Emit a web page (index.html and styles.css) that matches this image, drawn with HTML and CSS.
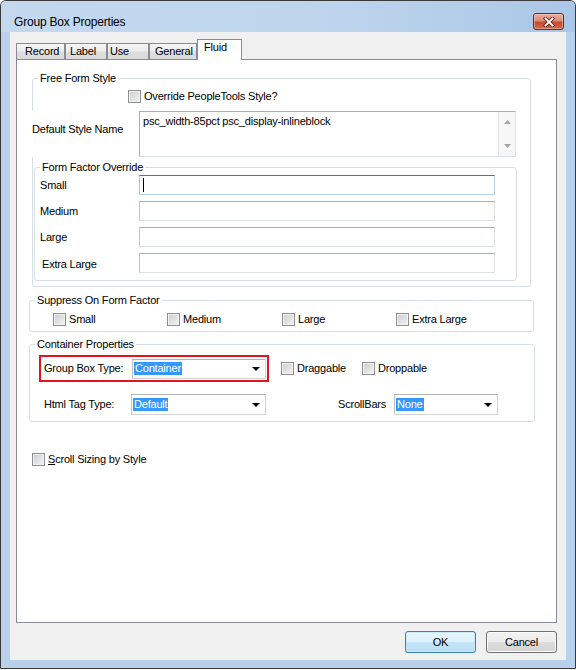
FILE: index.html
```html
<!DOCTYPE html>
<html>
<head>
<meta charset="utf-8">
<title>Group Box Properties</title>
<link rel="stylesheet" href="styles.css">
</head>
<body>
<div class="window">
  <div class="titlebar">
    <span class="title">Group Box Properties</span>
    <div class="close">
      <svg width="12" height="10" viewBox="0 0 12 10">
        <path d="M2.5 1.5 L9.5 8.5 M9.5 1.5 L2.5 8.5" stroke="#5b1f17" stroke-width="3.6" stroke-linecap="square" fill="none"/>
        <path d="M2.5 1.5 L9.5 8.5 M9.5 1.5 L2.5 8.5" stroke="#ffffff" stroke-width="1.9" stroke-linecap="square" fill="none"/>
      </svg>
    </div>
  </div>
  <div class="frame">
    <div class="client">
      <div class="tabs">
        <div class="tab tab-record">Record</div>
        <div class="tab tab-label">Label</div>
        <div class="tab tab-use">Use</div>
        <div class="tab tab-general">General</div>
        <div class="tab tab-fluid active">Fluid</div>
      </div>
      <div class="panel">
        <fieldset class="group g-free">
          <legend>Free Form Style</legend>
          <div class="check-row r-override">
            <span class="cb"></span><span class="cb-text">Override PeopleTools Style?</span>
          </div>
          <div class="style-row">
            <div class="style-label">Default Style Name</div>
            <div class="textarea">
              <div class="ta-text">psc_width-85pct psc_display-inlineblock</div>
              <div class="ta-scroll">
                <svg width="7" height="4" viewBox="0 0 7 4"><polygon points="3.5,0 7,4 0,4" fill="#a6a6a6"/></svg>
                <svg width="7" height="4" viewBox="0 0 7 4"><polygon points="0,0 7,0 3.5,4" fill="#a6a6a6"/></svg>
              </div>
            </div>
          </div>
          <fieldset class="group g-factor">
            <legend>Form Factor Override</legend>
            <div class="ff-row">
              <div class="ff-label">Small</div>
              <div class="input focus"><span class="caret"></span></div>
            </div>
            <div class="ff-row">
              <div class="ff-label">Medium</div>
              <div class="input"></div>
            </div>
            <div class="ff-row">
              <div class="ff-label">Large</div>
              <div class="input"></div>
            </div>
            <div class="ff-row">
              <div class="ff-label ff-label-xl">Extra Large</div>
              <div class="input"></div>
            </div>
          </fieldset>
        </fieldset>

        <fieldset class="group g-suppress">
          <legend>Suppress On Form Factor</legend>
          <div class="suppress-row">
            <div class="check-item"><span class="cb"></span><span class="cb-text">Small</span></div>
            <div class="check-item"><span class="cb"></span><span class="cb-text">Medium</span></div>
            <div class="check-item"><span class="cb"></span><span class="cb-text">Large</span></div>
            <div class="check-item"><span class="cb"></span><span class="cb-text">Extra Large</span></div>
          </div>
        </fieldset>

        <fieldset class="group g-container">
          <legend>Container Properties</legend>
          <div class="cp-row1">
            <div class="highlight-box">
              <div class="cp-label">Group Box Type:</div>
              <div class="select sel-type"><span class="sel-text">Container</span><span class="arrow"></span></div>
            </div>
            <div class="check-item drag"><span class="cb"></span><span class="cb-text">Draggable</span></div>
            <div class="check-item"><span class="cb"></span><span class="cb-text">Droppable</span></div>
          </div>
          <div class="cp-row2">
            <div class="cp-label html-label">Html Tag Type:</div>
            <div class="select sel-tag"><span class="sel-text">Default</span><span class="arrow"></span></div>
            <div class="cp-label scroll-label">ScrollBars</div>
            <div class="select sel-scroll"><span class="sel-text">None</span><span class="arrow"></span></div>
          </div>
        </fieldset>

        <div class="check-row r-scrollsize">
          <span class="cb"></span><span class="cb-text"><u>S</u>croll Sizing by Style</span>
        </div>
      </div>
      <div class="buttons">
        <div class="btn btn-default">OK</div>
        <div class="btn">Cancel</div>
      </div>
    </div>
  </div>
</div>
</body>
</html>
```

FILE: styles.css
```css
html, body {
  margin: 0;
  padding: 0;
  background: #ffffff;
}

body {
  font-family: "Liberation Sans", Arial, sans-serif;
  font-size: 11px;
  letter-spacing: -0.2px;
  color: #000000;
}

.window {
  width: 576px;
  height: 669px;
  box-sizing: border-box;
  border: 1px solid #3a3a3a;
  border-radius: 6px 6px 0 0;
  background: #b9d1ea;
  display: flex;
  flex-direction: column;
  overflow: hidden;
}

/* ---------- title bar ---------- */
.titlebar {
  height: 31px;
  flex: none;
  display: flex;
  align-items: flex-start;
  padding: 0 11px 0 13px;
  background: linear-gradient(to right, #c4d8ee 0%, #bed5ec 55%, #abc7e7 100%);
}

.title {
  margin-top: 14px;
  font-size: 12px;
  line-height: 14px;
  color: #000000;
}

.close {
  margin-left: auto;
  margin-top: 12px;
  width: 31px;
  height: 17px;
  box-sizing: border-box;
  border: 1px solid #6d2a22;
  border-radius: 3px;
  background: linear-gradient(#eab0a2 0%, #dd8a76 45%, #c74a30 55%, #d26a4c 100%);
  box-shadow: inset 0 0 0 1px rgba(255, 220, 210, 0.45);
  display: flex;
  align-items: center;
  justify-content: center;
}

.close svg {
  display: block;
}

/* ---------- frame / client ---------- */
.frame {
  flex: 1;
  display: flex;
  padding: 0 9px 8px 9px;
}

.client {
  flex: 1;
  background: #f0f0f0;
  padding: 7px 9px 0 6px;
}

/* ---------- tabs ---------- */
.tabs {
  display: flex;
  align-items: flex-end;
  height: 20px;
}

.tab {
  box-sizing: border-box;
  height: 16px;
  border: 1px solid #898c95;
  border-bottom: none;
  background: linear-gradient(#f6f6f6 0%, #ececec 45%, #dedede 55%, #dadada 100%);
  line-height: 14px;
  white-space: nowrap;
}

.tab-record { width: 49px; padding-left: 8px; }
.tab-label { width: 42px; padding-left: 4px; }
.tab-use { width: 42px; padding-left: 2px; }
.tab-general { width: 48px; padding-left: 5px; }
.tab-fluid { width: 45px; padding-left: 6px; }

.tab.active {
  height: 21px;
  margin-bottom: -1px;
  background: #ffffff;
  line-height: 15px;
  position: relative;
  z-index: 1;
}

/* ---------- panel ---------- */
.panel {
  height: 564px;
  box-sizing: border-box;
  border: 1px solid #898c95;
  background: #ffffff;
  overflow: hidden;
}

.group {
  box-sizing: border-box;
  min-width: 0;
  margin: 0;
  padding: 0;
  border: 1px solid #d5dfe5;
  border-radius: 3px;
}

.group legend {
  padding: 0 2px;
  margin-left: 5px;
  line-height: 13px;
  font-size: 11px;
}

/* free form style */
.g-free {
  width: 499px;
  margin: 12px 0 0 15px;
}

.check-row {
  display: flex;
  align-items: center;
  height: 13px;
}

.r-override {
  margin-top: 5px;
  padding-left: 95px;
}

.cb {
  flex: none;
  width: 13px;
  height: 13px;
  box-sizing: border-box;
  border: 1px solid #8e8f8f;
  background: linear-gradient(135deg, #c9ccd1 0%, #dfe0e2 50%, #f4f4f4 100%);
  box-shadow: inset 0 0 0 1px #f2f2f2;
}

.cb-text {
  margin-left: 3px;
  line-height: 13px;
  white-space: nowrap;
}

.style-row {
  display: flex;
  margin-top: 8px;
}

.style-label {
  margin-left: -1px;
  width: 107px;
  height: 46px;
  box-sizing: border-box;
  padding-top: 12px;
  line-height: 13px;
  background: #ffffff;
  white-space: nowrap;
}

.textarea {
  width: 377px;
  height: 46px;
  box-sizing: border-box;
  border: 1px solid #dbdfe6;
  border-top-color: #abadb3;
  border-left-color: #abadb3;
  display: flex;
}

.ta-text {
  flex: 1;
  padding: 3px 0 0 3px;
  line-height: 13px;
  white-space: nowrap;
}

.ta-scroll {
  width: 17px;
  box-sizing: border-box;
  border-left: 1px solid #e6e6e6;
  background: #f7f7f7;
  display: flex;
  flex-direction: column;
  align-items: center;
  justify-content: space-between;
  padding: 8px 0;
}

.ta-scroll svg {
  display: block;
}

/* form factor override */
.g-factor {
  width: 483px;
  margin: 4px 0 5px 1px;
  padding-bottom: 7px;
}

.ff-row {
  display: flex;
  align-items: center;
  height: 20px;
  margin-top: 6px;
}

.ff-row:first-of-type {
  margin-top: 1px;
}

.ff-label {
  width: 99px;
  padding-left: 5px;
  line-height: 13px;
  white-space: nowrap;
}

.ff-label-xl {
  width: 97px;
  padding-left: 7px;
  padding-top: 2px;
}

.input {
  width: 356px;
  height: 20px;
  box-sizing: border-box;
  border: 1px solid #dbdfe6;
  border-top-color: #abadb3;
  border-left-color: #c4c7cd;
  background: #ffffff;
  position: relative;
}

.input.focus {
  border-color: #b5d3ea;
  border-top-color: #3d7bad;
  border-left-color: #a4c4de;
}

.caret {
  position: absolute;
  left: 3px;
  top: 2px;
  width: 1px;
  height: 14px;
  background: #000000;
}

/* suppress on form factor */
.g-suppress {
  width: 505px;
  margin: 7px 0 0 12px;
  padding-bottom: 5px;
}

.suppress-row {
  display: grid;
  grid-template-columns: 114px 115px 114px auto;
  margin-top: 6px;
  padding-left: 23px;
}

.check-item {
  display: flex;
  align-items: center;
  height: 13px;
}

/* container properties */
.g-container {
  width: 506px;
  margin: 6px 0 0 12px;
  padding-bottom: 6px;
}

.cp-row1 {
  display: flex;
  align-items: center;
  margin-top: 4px;
  padding-left: 9px;
}

.highlight-box {
  width: 230px;
  height: 27px;
  box-sizing: border-box;
  border: 2px solid #e3141c;
  display: flex;
  align-items: center;
  padding-left: 3px;
}

.cp-label {
  line-height: 13px;
  white-space: nowrap;
}

.highlight-box .cp-label {
  width: 88px;
}

.check-item.drag {
  margin-left: 12px;
  width: 81px;
}

.select {
  height: 20px;
  box-sizing: border-box;
  border: 1px solid #d3d3d3;
  border-top-color: #b4b4b4;
  border-left-color: #c2c2c2;
  background: #ffffff;
  display: flex;
  align-items: center;
  padding-left: 1px;
  padding-right: 5px;
}

.sel-type { width: 134px; }
.sel-tag { width: 135px; height: 21px; }
.sel-scroll { width: 104px; height: 21px; }

.sel-text {
  background: #3399ff;
  color: #ffffff;
  line-height: 13px;
  padding: 0 1px;
}

.arrow {
  margin-left: auto;
  width: 0;
  height: 0;
  border-left: 4px solid transparent;
  border-right: 4px solid transparent;
  border-top: 4px solid #000000;
}

.cp-row2 {
  display: flex;
  align-items: center;
  margin-top: 12px;
}

.html-label {
  margin-left: 14px;
  width: 87px;
}

.scroll-label {
  margin-left: 72px;
  width: 56px;
}

/* scroll sizing */
.r-scrollsize {
  margin-top: 31px;
  padding-left: 15px;
}

/* ---------- buttons ---------- */
.buttons {
  display: flex;
  justify-content: flex-end;
  gap: 10px;
  margin-top: 8px;
}

.btn {
  width: 71px;
  height: 22px;
  box-sizing: border-box;
  border: 1px solid #707070;
  border-radius: 3px;
  background: linear-gradient(#f3f3f3 0%, #ececec 48%, #dddddd 52%, #d3d3d3 100%);
  box-shadow: inset 0 0 0 1px #fbfbfb;
  text-align: center;
  line-height: 20px;
}

.btn-default {
  border-color: #3c7fb1;
  background: linear-gradient(#eaf6fd 0%, #dcf0fb 48%, #c6e6f8 52%, #b7dcf3 100%);
  box-shadow: inset 0 0 0 1px #c9e9fb;
}
```
